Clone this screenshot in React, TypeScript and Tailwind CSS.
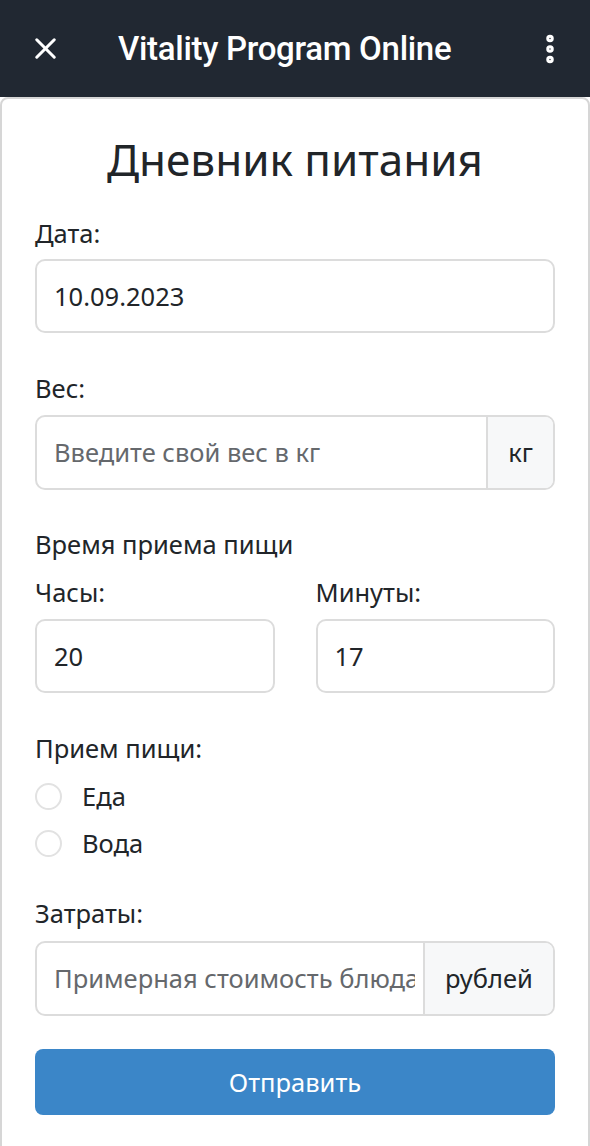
import { X, EllipsisVertical } from 'lucide-react'

const font = { fontFamily: '"Noto Sans", "Open Sans", sans-serif' }

function Label({ children }: { children: React.ReactNode }) {
  return <div className="text-[25.5px] leading-[28px] text-[#212529]">{children}</div>
}

export default function App() {
  return (
    <div className="min-h-[1146px] bg-white overflow-hidden" style={font}>
      <header className="h-[97px] bg-[#212832] flex items-center px-[28px] text-white">
        <X size={35} strokeWidth={2.1} className="shrink-0" />
        <div className="ml-[55px] flex-1 text-[33px] font-medium tracking-[-0.3px]" style={{ fontFamily: 'Roboto, sans-serif' }}>
          Vitality Program Online
        </div>
        <EllipsisVertical size={36} strokeWidth={3} className="shrink-0 -mr-[6px]" />
      </header>

      <main className="border-2 border-[#d6d6d6] rounded-t-[8px] h-[1070px] px-[33px] pt-[30px]">
        <h1 className="text-center text-[44px] leading-[60px] text-[#212529]">Дневник питания</h1>

        <div className="mt-[30px]">
          <Label>Дата:</Label>
          <div className="mt-[12px] h-[74px] border-2 border-[#dcdcdc] rounded-[10px] flex items-center px-[17px] text-[25.5px] text-[#212529]">
            10.09.2023
          </div>
        </div>

        <div className="mt-[41px]">
          <Label>Вес:</Label>
          <div className="mt-[13px] h-[75px] border-2 border-[#dcdcdc] rounded-[10px] flex overflow-hidden">
            <div className="flex-1 flex items-center px-[17px] text-[25.5px] text-[#65686c]">Введите свой вес в кг</div>
            <div className="w-[67px] border-l-2 border-[#dcdcdc] bg-[#f7f8f9] flex items-center justify-center text-[25.5px] text-[#212529]">кг</div>
          </div>
        </div>

        <div className="mt-[40px]">
          <Label>Время приема пищи</Label>
          <div className="mt-[20px] grid grid-cols-2 gap-x-[41px]">
            <div>
              <Label>Часы:</Label>
              <div className="mt-[13px] h-[74px] border-2 border-[#dcdcdc] rounded-[10px] flex items-center px-[17px] text-[25.5px] text-[#212529]">20</div>
            </div>
            <div>
              <Label>Минуты:</Label>
              <div className="mt-[13px] h-[74px] border-2 border-[#dcdcdc] rounded-[10px] flex items-center px-[17px] text-[25.5px] text-[#212529]">17</div>
            </div>
          </div>
        </div>

        <div className="mt-[41px]">
          <Label>Прием пищи:</Label>
          <div className="mt-[20px] flex flex-col gap-[19px]">
            {['Еда', 'Вода'].map((t) => (
              <div key={t} className="flex items-center h-[28px]">
                <span className="w-[27px] h-[27px] rounded-full border-2 border-[#e2e2e2] bg-white" />
                <span className="ml-[20px] text-[25.5px] text-[#212529]">{t}</span>
              </div>
            ))}
          </div>
        </div>

        <div className="mt-[42px]">
          <Label>Затраты:</Label>
          <div className="mt-[14px] h-[75px] border-2 border-[#dcdcdc] rounded-[10px] flex overflow-hidden">
            <div className="flex-1 min-w-0 flex items-center pl-[17px] pr-[8px] text-[25.5px] text-[#65686c] whitespace-nowrap overflow-hidden">
              <span className="overflow-hidden">Примерная стоимость блюда</span>
            </div>
            <div className="w-[130px] shrink-0 border-l-2 border-[#dcdcdc] bg-[#f7f8f9] flex items-center justify-center text-[25.5px] text-[#212529]">рублей</div>
          </div>
        </div>

        <button className="mt-[33px] w-full h-[66px] rounded-[8px] bg-[#3b86c8] text-white text-[25.5px]">Отправить</button>
      </main>
    </div>
  )
}
